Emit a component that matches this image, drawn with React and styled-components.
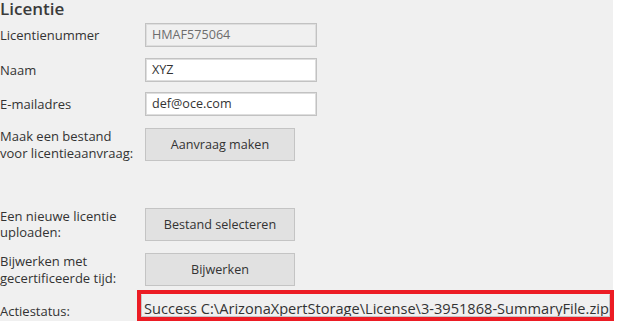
import React from "react";
import styled, { createGlobalStyle } from "styled-components";

const GlobalStyle = createGlobalStyle`
  html, body {
    margin: 0;
    padding: 0;
    background: #ffffff;
  }
  body {
    font-family: "Open Sans", "Noto Sans", sans-serif;
  }
`;

export default function App() {
  return (
    <>
      <GlobalStyle />
      <Panel>
        <Heading>Licentie</Heading>

        <Row gap={5} height={24}>
          <Label>Licentienummer</Label>
          <TextBox disabled>HMAF575064</TextBox>
        </Row>
        <Row gap={11} height={24}>
          <Label>Naam</Label>
          <TextBox>XYZ</TextBox>
        </Row>
        <Row gap={10} height={24}>
          <Label>E-mailadres</Label>
          <TextBox>def@oce.com</TextBox>
        </Row>
        <Row gap={12} height={33}>
          <Label>
            Maak een bestand
            <br />
            voor licentieaanvraag:
          </Label>
          <Button>Aanvraag maken</Button>
        </Row>

        <Row gap={47} height={32}>
          <Label>
            Een nieuwe licentie
            <br />
            uploaden:
          </Label>
          <Button>Bestand selecteren</Button>
        </Row>
        <Row gap={13} height={33}>
          <Label>
            Bijwerken met
            <br />
            gecertificeerde tijd:
          </Label>
          <Button>Bijwerken</Button>
        </Row>
        <Row gap={4} height={31} align="flex-end">
          <Label status>Actiestatus:</Label>
          <Highlight>
            <StatusField>
              Success C:\ArizonaXpertStorage\License\3-3951868-SummaryFile.zip
            </StatusField>
          </Highlight>
        </Row>
      </Panel>
    </>
  );
}

const Panel = styled.div`
  width: 613px;
  height: 321px;
  background: #f0f0f0;
  color: #333333;
`;

const Heading = styled.h1`
  margin: 0;
  height: 18px;
  font-size: 17px;
  line-height: 18px;
  font-weight: 600;
  color: #3a3a3a;
`;

const Row = styled.div`
  display: flex;
  align-items: ${(p) => p.align || "center"};
  margin-top: ${(p) => p.gap}px;
  height: ${(p) => p.height}px;
`;

const Label = styled.div`
  flex: 0 0 145px;
  font-size: 13px;
  line-height: 16.5px;
  color: #333333;
  padding-bottom: ${(p) => (p.status ? "2px" : "0")};
`;

const TextBox = styled.div`
  box-sizing: border-box;
  width: 172px;
  height: 24px;
  padding: 0 6px;
  border: 1px solid #c2c2c2;
  box-shadow: inset 0 0 0 1px #dedede;
  background: ${(p) => (p.disabled ? "#f0f0f0" : "#ffffff")};
  color: ${(p) => (p.disabled ? "#6d6d6d" : "#333333")};
  font-size: 12.6px;
  line-height: 22px;
`;

const Button = styled.div`
  box-sizing: border-box;
  width: 150px;
  height: 33px;
  border: 1px solid #c4c4c4;
  background: #e1e1e1;
  color: #333333;
  font-size: 12.6px;
  line-height: 31px;
  text-align: center;
`;

const Highlight = styled.div`
  box-sizing: border-box;
  margin-left: -8px;
  width: 482px;
  height: 31px;
  border: 4px solid #ec1c24;
`;

const StatusField = styled.div`
  box-sizing: border-box;
  height: 23px;
  padding: 4px 0 0 2px;
  border: 1px solid #c6c6c6;
  border-top-color: transparent;
  background: #f0f0f0;
  color: #333333;
  font-size: 14.6px;
  line-height: 18px;
  white-space: nowrap;
  overflow: hidden;
`;
